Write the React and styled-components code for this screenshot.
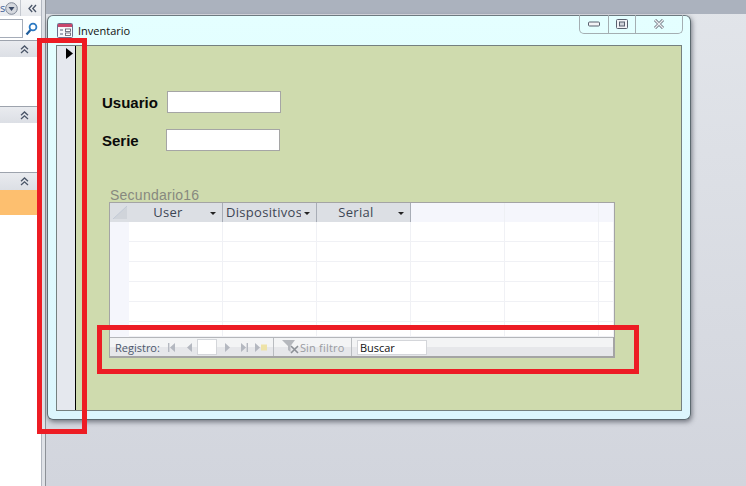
import React from "react"
import styled, { createGlobalStyle } from "styled-components"

const GlobalStyle = createGlobalStyle`
  html, body {
    margin: 0;
    padding: 0;
    width: 746px;
    height: 486px;
    overflow: hidden;
    background: #fff;
    font-family: "Open Sans", "Liberation Sans", sans-serif;
  }
  * { box-sizing: border-box; }
`

const Screen = styled.div`
  position: relative;
  display: flex;
  width: 746px;
  height: 486px;
  overflow: hidden;
`

const NavPane = styled.div`
  width: 41px;
  display: flex;
  flex-direction: column;
  background: #fff;
`

const NavTop = styled.div`
  height: 16px;
  display: flex;
  align-items: center;
  background: linear-gradient(#f3f4f6, #e8eaee);
  color: #3f5f96;
  font-size: 11px;
  overflow: hidden;
`

const NavTopLetter = styled.span`
  width: 5px;
  line-height: 14px;
`

const NavTopLine = styled.div`
  width: 1px;
  height: 16px;
  margin: 0 7px 0 2px;
  background: #c4c8cf;
`

const NavSearch = styled.div`
  height: 24px;
  display: flex;
  align-items: center;
  padding-top: 1px;
  gap: 2px;
`

const NavSearchInput = styled.div`
  width: 23px;
  height: 19px;
  background: #fff;
  border: 1px solid #a5acb8;
  border-left: none;
`

const NavHeader = styled.div`
  height: ${(p) => p.$height || 17}px;
  display: flex;
  align-items: center;
  justify-content: flex-end;
  padding-right: 12px;
  background: linear-gradient(#e9ebef, #dcdfe5);
  border-top: 1px solid #9da3ad;
`

const NavGroup = styled.div`
  height: ${(p) => p.$height}px;
  background: #fff;
`

const NavSelected = styled.div`
  height: 25px;
  background: #fdbf6f;
`

const NavDivider = styled.div`
  width: 5px;
  background: linear-gradient(90deg, #b2b7c0 0 1px, #dfe2e7 1px 4px, #8d9197 4px);
`

const Workspace = styled.div`
  flex: 1;
  display: flex;
  flex-direction: column;
  background: linear-gradient(#e2e5ea, #d2d5dd);
`

const TopBand = styled.div`
  height: 14px;
  background: #abb2be;
`

const Window = styled.div`
  width: 644px;
  height: 405px;
  margin: 1px 0 0 1px;
  padding: 0 8px 8px 8px;
  display: flex;
  flex-direction: column;
  background: linear-gradient(#e4ffff, #dcf6fd);
  border: 1px solid #5d6a70;
  border-top-color: #6d7a80;
  border-radius: 6px;
  box-shadow: 1px 2px 5px rgba(60, 65, 75, 0.65);
`

const TitleBar = styled.div`
  height: 29px;
  flex: none;
  display: flex;
  align-items: center;
  position: relative;
  padding-left: 1px;
  font-size: 11px;
  color: #111;
  gap: 5px;
`

const WindowButtons = styled.div`
  position: absolute;
  top: -1px;
  right: -1px;
  height: 19px;
  display: flex;
  border: 1px solid #a4aeb2;
  border-top: none;
  border-radius: 0 0 5px 5px;
`

const WindowButton = styled.div`
  width: ${(p) => p.$width}px;
  display: flex;
  align-items: center;
  justify-content: center;
  & + & {
    border-left: 1px solid #a4aeb2;
  }
`

const FormFrame = styled.div`
  flex: 1;
  display: flex;
  border: 1px solid #75807f;
  min-height: 0;
`

const RecordSelector = styled.div`
  width: 19px;
  flex: none;
  display: flex;
  align-items: flex-start;
  padding: 2px 0 0 9px;
  background: #e5e8ee;
  border-right: 1px solid #000;
`

const Detail = styled.div`
  flex: 1;
  padding-top: 45px;
  background: #cfdbae;
  display: flex;
  flex-direction: column;
`

const FieldRow = styled.div`
  display: flex;
  align-items: center;
  height: 22px;
  margin-bottom: 16px;
  padding-left: 26px;
`

const FieldLabel = styled.label`
  width: ${(p) => p.$width}px;
  font: bold 15px "Liberation Sans", Arial, sans-serif;
  color: #0a0a0a;
`

const FieldInput = styled.div`
  width: 114px;
  height: 22px;
  background: #fff;
  border: 1px solid #a5a5a5;
`

const SubformLabel = styled.div`
  margin: 20px 0 0 34px;
  height: 15px;
  font: 14px/16px "Liberation Sans", Arial, sans-serif;
  letter-spacing: 0.25px;
  color: #87897f;
`

const Subform = styled.div`
  width: 506px;
  height: 156px;
  margin-left: 33px;
  display: flex;
  flex-direction: column;
  background: #fff;
  border: 1px solid #a4a4a4;
  border-right-width: 2px;
  border-bottom-width: 2px;
`

const GridRow = styled.div`
  height: ${(p) => p.$height}px;
  flex: none;
  display: flex;
`

const Corner = styled.div`
  width: 19px;
  flex: none;
  display: flex;
  align-items: flex-end;
  justify-content: center;
  background: #dcdfe4;
  padding-bottom: 3px;
`

const HeaderCell = styled.div`
  width: ${(p) => p.$width}px;
  flex: none;
  position: relative;
  padding: 0 15px 2px ${(p) => (p.$left ? 3 : 0)}px;
  display: flex;
  align-items: center;
  justify-content: ${(p) => (p.$left ? "flex-start" : "center")};
  white-space: nowrap;
  background: #dcdfe4;
  border-right: 1px solid #a8adb6;
  font-size: 13px;
  letter-spacing: 0.3px;
  color: #3d4654;
`

const HeaderText = styled.span`
  display: block;
  overflow: hidden;
`

const HeaderArrow = styled.span`
  position: absolute;
  right: 6px;
  top: 9px;
  border-left: 3px solid transparent;
  border-right: 3px solid transparent;
  border-top: 3px solid #222;
  width: 0;
  height: 0;
`

const EmptyHead = styled.div`
  width: ${(p) => p.$width}px;
  flex: none;
  background: #f5f6fc;
  border-right: 1px solid #eef0f4;
`

const RowSelector = styled.div`
  width: 19px;
  flex: none;
  background: #f5f6fc;
`

const Cell = styled.div`
  width: ${(p) => p.$width}px;
  flex: none;
  border-right: 1px solid #f0f1f5;
  border-bottom: 1px solid #f0f1f5;
`

const NavBar = styled.div`
  height: 19px;
  flex: none;
  display: flex;
  align-items: center;
  padding-left: 5px;
  background: linear-gradient(#f3f4f5 50%, #e6e7ea 50%);
  border-top: 1px solid #b4b6ba;
  font-size: 11px;
  color: #4c586c;
`

const NavIcons = styled.div`
  display: flex;
  align-items: center;
  margin-left: ${(p) => p.$left}px;
`

const IconGap = styled.span`
  width: ${(p) => p.$w}px;
`

const RecordBox = styled.div`
  width: 20px;
  height: 16px;
  margin: 0 6px 0 3px;
  background: #fff;
  border: 1px solid #d4d6da;
`

const NavSeparator = styled.div`
  width: 1px;
  height: 18px;
  margin: 0 ${(p) => p.$right}px 0 ${(p) => p.$left}px;
  background: #b9bcc0;
`

const FilterText = styled.span`
  width: 44px;
  margin-left: 1px;
  white-space: nowrap;
  letter-spacing: 0.2px;
  color: #9a9ca2;
`

const SearchBox = styled.div`
  width: 70px;
  height: 15px;
  padding-left: 2px;
  line-height: 14px;
  background: #fff;
  border: 1px solid #d4d6da;
  color: #111;
`

const Annotation = styled.div`
  position: absolute;
  left: ${(p) => p.$x}px;
  top: ${(p) => p.$y}px;
  width: ${(p) => p.$w}px;
  height: ${(p) => p.$h}px;
  border: 5px solid #ed1c24;
`

const DoubleUp = ({ color = "#4a5568" }) => (
  <svg width="9" height="9" viewBox="0 0 9 9" fill="none" stroke={color} strokeWidth="1.3">
    <path d="M1 4.2 4.5 1 8 4.2M1 8 4.5 4.8 8 8" />
  </svg>
)

const FormIcon = () => (
  <svg width="16" height="15" viewBox="0 0 16 15">
    <rect x="0.5" y="0.5" width="15" height="14" rx="1" fill="#f7f8fb" stroke="#6b6f8c" />
    <rect x="1" y="1" width="14" height="3" fill="#c9476d" />
    <path d="M3 7h3M3 11h3" stroke="#555e7a" />
    <rect x="8.5" y="6" width="5" height="2.4" fill="#fff" stroke="#556" strokeWidth="0.8" />
    <rect x="8.5" y="10" width="5" height="2.4" fill="#fff" stroke="#556" strokeWidth="0.8" />
  </svg>
)

const Glyph = ({ d, width = 9, fill = "#b4b8c0" }) => (
  <svg width={width} height="9" viewBox={`0 0 ${width} 9`} fill={fill}>
    <path d={d} />
  </svg>
)

const columns = [94, 94, 94, 94, 94, 15]

const App = () => {
  return (
    <Screen>
      <GlobalStyle />
      <NavPane>
        <NavTop>
          <NavTopLetter>s</NavTopLetter>
          <svg width="13" height="13" viewBox="0 0 13 13">
            <circle cx="6.5" cy="6.5" r="5.8" fill="#d5d8de" stroke="#7d8595" />
            <path d="M3.5 5h6L6.5 9z" fill="#3c4a66" />
          </svg>
          <NavTopLine />
          <svg width="9" height="9" viewBox="0 0 9 9" fill="none" stroke="#4a5568" strokeWidth="1.3">
            <path d="M4.2 1 1 4.5 4.2 8M8 1 4.8 4.5 8 8" />
          </svg>
        </NavTop>
        <NavSearch>
          <NavSearchInput />
          <svg width="13" height="14" viewBox="0 0 13 14" fill="none">
            <circle cx="8" cy="5" r="3.4" stroke="#2b79c2" strokeWidth="1.8" />
            <path d="M5.5 8 1.5 12.5" stroke="#1f5d9c" strokeWidth="2.2" />
          </svg>
        </NavSearch>
        <NavHeader><DoubleUp /></NavHeader>
        <NavGroup $height={49} />
        <NavHeader><DoubleUp /></NavHeader>
        <NavGroup $height={49} />
        <NavHeader $height={18}><DoubleUp /></NavHeader>
        <NavSelected />
      </NavPane>
      <NavDivider />
      <Workspace>
        <TopBand />
        <Window>
          <TitleBar>
            <FormIcon />
            Inventario
            <WindowButtons>
              <WindowButton $width={28}>
                <svg width="12" height="6" viewBox="0 0 12 6">
                  <rect x="0.5" y="1" width="11" height="4" rx="1" fill="#f2f3f6" stroke="#59606e" />
                </svg>
              </WindowButton>
              <WindowButton $width={27}>
                <svg width="12" height="10" viewBox="0 0 12 10" fill="#f2f3f6" stroke="#59606e">
                  <rect x="0.5" y="0.5" width="11" height="9" rx="1" />
                  <rect x="3.5" y="3" width="5" height="4" fill="#cfd3da" />
                </svg>
              </WindowButton>
              <WindowButton $width={47}>
                <svg width="12" height="10" viewBox="0 0 12 10">
                  <path d="M2 1 6 5l4-4M2 9l4-4 4 4" fill="none" stroke="#6a707c" strokeWidth="3" />
                  <path d="M2 1 6 5l4-4M2 9l4-4 4 4" fill="none" stroke="#eceef1" strokeWidth="1.4" />
                </svg>
              </WindowButton>
            </WindowButtons>
          </TitleBar>
          <FormFrame>
            <RecordSelector>
              <svg width="7" height="11" viewBox="0 0 7 11">
                <path d="M0 0 7 5.5 0 11z" fill="#000" />
              </svg>
            </RecordSelector>
            <Detail>
              <FieldRow>
                <FieldLabel $width={65}>Usuario</FieldLabel>
                <FieldInput />
              </FieldRow>
              <FieldRow>
                <FieldLabel $width={64}>Serie</FieldLabel>
                <FieldInput />
              </FieldRow>
              <SubformLabel>Secundario16</SubformLabel>
              <Subform>
                <GridRow $height={19}>
                  <Corner>
                    <svg width="14" height="13" viewBox="0 0 14 13">
                      <path d="M0 13 14 0v13z" fill="#d0d4da" />
                      <path d="M0 13 14 0" stroke="#c2cad6" />
                    </svg>
                  </Corner>
                  <HeaderCell $width={94}><HeaderText>User</HeaderText><HeaderArrow /></HeaderCell>
                  <HeaderCell $width={94} $left><HeaderText>Dispositivos</HeaderText><HeaderArrow /></HeaderCell>
                  <HeaderCell $width={94}><HeaderText>Serial</HeaderText><HeaderArrow /></HeaderCell>
                  <EmptyHead $width={94} />
                  <EmptyHead $width={94} />
                  <EmptyHead $width={15} />
                </GridRow>
                {[0, 1, 2, 3, 4, 5].map((row) => (
                  <GridRow key={row} $height={row === 5 ? 15 : 20}>
                    <RowSelector />
                    {columns.map((width, i) => (
                      <Cell key={i} $width={width} />
                    ))}
                  </GridRow>
                ))}
                <NavBar>
                  Registro:
                  <NavIcons $left={7}>
                    <Glyph d="M1 0h1.4v9H1zM8 0v9L3 4.5z" />
                    <IconGap $w={9} />
                    <Glyph d="M7 0v9L2 4.5z" />
                  </NavIcons>
                  <RecordBox />
                  <NavIcons $left={0}>
                    <Glyph d="M2 0v9l5-4.5z" />
                    <IconGap $w={8} />
                    <Glyph d="M1 0v9l5-4.5zM6.6 0H8v9H6.6z" />
                    <IconGap $w={6} />
                    <Glyph d="M0 0v9l5-4.5z" width={6} />
                    <Glyph d="M0 1.5h6v6H0z" width={6} fill="#eee3a8" />
                  </NavIcons>
                  <NavSeparator $left={6} $right={8} />
                  <svg width="17" height="14" viewBox="0 0 17 14">
                    <path d="M0 0h13L8.5 6v6L6 10V6z" fill="#b5b8bd" />
                    <path d="M9 6l7 7M16 6l-7 7" stroke="#8c9096" strokeWidth="1.6" />
                  </svg>
                  <FilterText>Sin filtro</FilterText>
                  <NavSeparator $left={7} $right={5} />
                  <SearchBox>Buscar</SearchBox>
                </NavBar>
              </Subform>
            </Detail>
          </FormFrame>
        </Window>
      </Workspace>
      <Annotation $x={37} $y={38} $w={50} $h={396} />
      <Annotation $x={97} $y={325} $w={542} $h={49} />
    </Screen>
  )
}

export default App
